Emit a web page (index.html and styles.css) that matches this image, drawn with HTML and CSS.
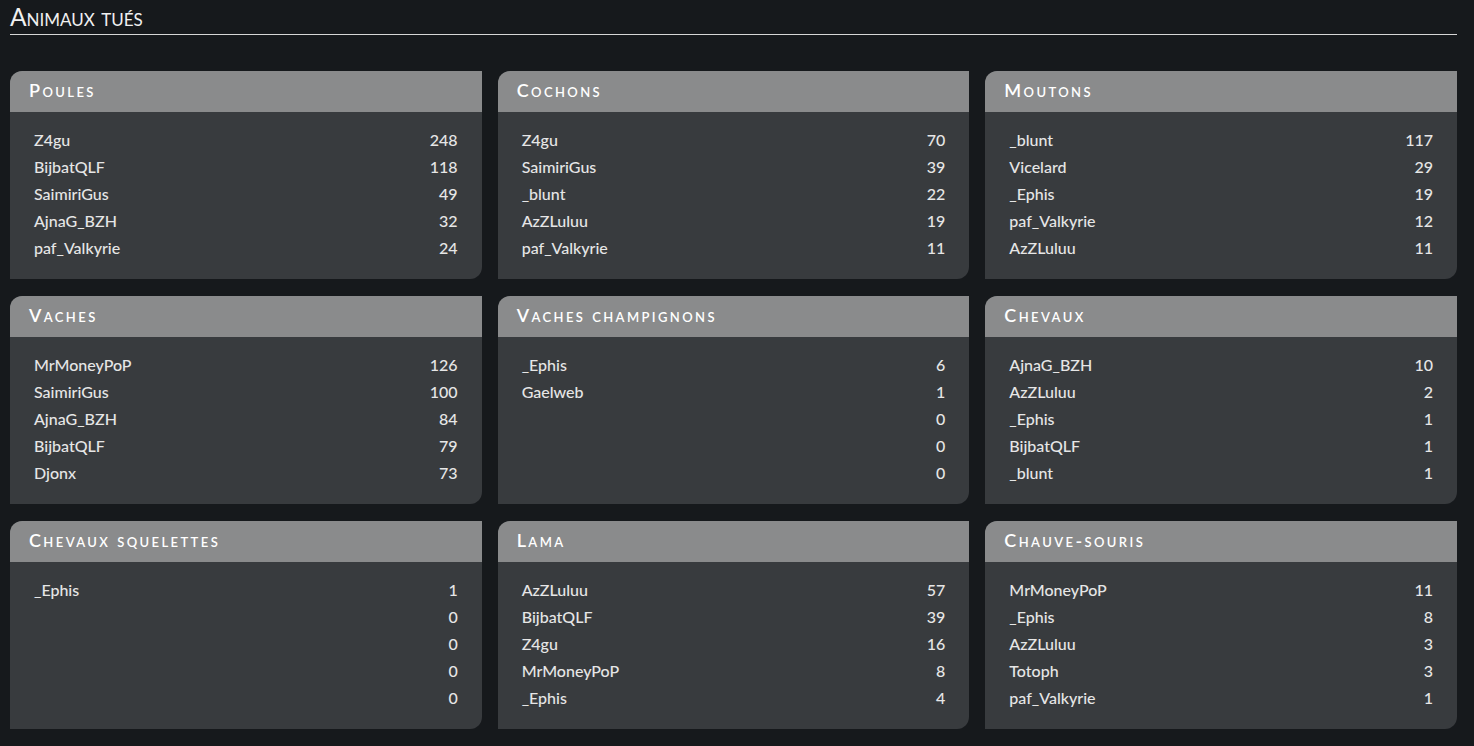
FILE: index.html
```html
<!DOCTYPE html>
<html lang="fr">
<head>
  <meta charset="UTF-8" />
  <title>Animaux tués</title>
  <link rel="stylesheet" href="styles.css">
</head>
<body>
  <div class="page">
    <h1 class="page-title">Animaux tués</h1>

    <div class="grid">
      <div class="card">
        <div class="card-head">Poules</div>
        <div class="card-body">
          <div class="row"><span>Z4gu</span><span>248</span></div>
          <div class="row"><span>BijbatQLF</span><span>118</span></div>
          <div class="row"><span>SaimiriGus</span><span>49</span></div>
          <div class="row"><span>AjnaG_BZH</span><span>32</span></div>
          <div class="row"><span>paf_Valkyrie</span><span>24</span></div>
        </div>
      </div>

      <div class="card">
        <div class="card-head">Cochons</div>
        <div class="card-body">
          <div class="row"><span>Z4gu</span><span>70</span></div>
          <div class="row"><span>SaimiriGus</span><span>39</span></div>
          <div class="row"><span>_blunt</span><span>22</span></div>
          <div class="row"><span>AzZLuluu</span><span>19</span></div>
          <div class="row"><span>paf_Valkyrie</span><span>11</span></div>
        </div>
      </div>

      <div class="card">
        <div class="card-head">Moutons</div>
        <div class="card-body">
          <div class="row"><span>_blunt</span><span>117</span></div>
          <div class="row"><span>Vicelard</span><span>29</span></div>
          <div class="row"><span>_Ephis</span><span>19</span></div>
          <div class="row"><span>paf_Valkyrie</span><span>12</span></div>
          <div class="row"><span>AzZLuluu</span><span>11</span></div>
        </div>
      </div>

      <div class="card">
        <div class="card-head">Vaches</div>
        <div class="card-body">
          <div class="row"><span>MrMoneyPoP</span><span>126</span></div>
          <div class="row"><span>SaimiriGus</span><span>100</span></div>
          <div class="row"><span>AjnaG_BZH</span><span>84</span></div>
          <div class="row"><span>BijbatQLF</span><span>79</span></div>
          <div class="row"><span>Djonx</span><span>73</span></div>
        </div>
      </div>

      <div class="card">
        <div class="card-head">Vaches champignons</div>
        <div class="card-body">
          <div class="row"><span>_Ephis</span><span>6</span></div>
          <div class="row"><span>Gaelweb</span><span>1</span></div>
          <div class="row"><span></span><span>0</span></div>
          <div class="row"><span></span><span>0</span></div>
          <div class="row"><span></span><span>0</span></div>
        </div>
      </div>

      <div class="card">
        <div class="card-head">Chevaux</div>
        <div class="card-body">
          <div class="row"><span>AjnaG_BZH</span><span>10</span></div>
          <div class="row"><span>AzZLuluu</span><span>2</span></div>
          <div class="row"><span>_Ephis</span><span>1</span></div>
          <div class="row"><span>BijbatQLF</span><span>1</span></div>
          <div class="row"><span>_blunt</span><span>1</span></div>
        </div>
      </div>

      <div class="card">
        <div class="card-head">Chevaux squelettes</div>
        <div class="card-body">
          <div class="row"><span>_Ephis</span><span>1</span></div>
          <div class="row"><span></span><span>0</span></div>
          <div class="row"><span></span><span>0</span></div>
          <div class="row"><span></span><span>0</span></div>
          <div class="row"><span></span><span>0</span></div>
        </div>
      </div>

      <div class="card">
        <div class="card-head">Lama</div>
        <div class="card-body">
          <div class="row"><span>AzZLuluu</span><span>57</span></div>
          <div class="row"><span>BijbatQLF</span><span>39</span></div>
          <div class="row"><span>Z4gu</span><span>16</span></div>
          <div class="row"><span>MrMoneyPoP</span><span>8</span></div>
          <div class="row"><span>_Ephis</span><span>4</span></div>
        </div>
      </div>

      <div class="card">
        <div class="card-head">Chauve-souris</div>
        <div class="card-body">
          <div class="row"><span>MrMoneyPoP</span><span>11</span></div>
          <div class="row"><span>_Ephis</span><span>8</span></div>
          <div class="row"><span>AzZLuluu</span><span>3</span></div>
          <div class="row"><span>Totoph</span><span>3</span></div>
          <div class="row"><span>paf_Valkyrie</span><span>1</span></div>
        </div>
      </div>
    </div>
  </div>
</body>
</html>
```

FILE: styles.css
```css
body {
  margin: 0;
  background: #16191c;
  color: #e6e6e6;
  font-family: Lato, "Open Sans", sans-serif;
}
.page {
  width: 1447px;
  padding-left: 10px;
}
.page-title {
  margin: 3px 0 0;
  padding-bottom: 3px;
  font-size: 24.5px;
  line-height: 28px;
  font-weight: normal;
  font-variant: small-caps;
  color: #f0f0f0;
  border-bottom: 1px solid #d6d6d6;
}
.grid {
  margin-top: 36px;
  display: grid;
  grid-template-columns: repeat(3, 1fr);
  column-gap: 16px;
  row-gap: 17px;
}
.card {
  background: #383b3e;
  border-radius: 12px 0 12px 0;
  overflow: hidden;
  height: 208px;
}
.card-head {
  background: #8a8b8c;
  height: 41px;
  line-height: 39px;
  padding: 0 19px 2px;
  box-sizing: border-box;
  color: #fff;
  font-size: 18px;
  font-weight: 600;
  font-variant: small-caps;
  letter-spacing: 2.4px;
}
.card-body {
  padding: 14px 24px 0;
  font-size: 16px;
  font-weight: 500;
}
.row {
  display: flex;
  justify-content: space-between;
  line-height: 27px;
}
```
